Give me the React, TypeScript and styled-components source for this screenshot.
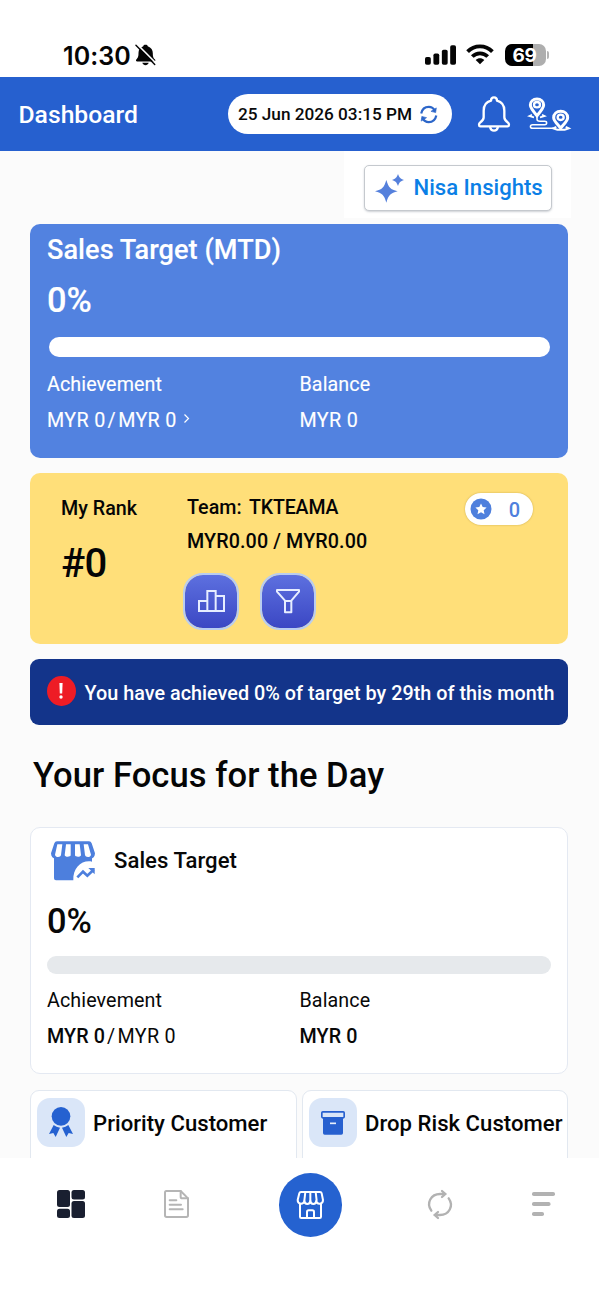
import React from 'react';
import styled, { createGlobalStyle } from 'styled-components';

const GlobalStyle = createGlobalStyle`
  * { box-sizing: border-box; }
  body { margin: 0; background: #fff; font-family: Roboto, sans-serif; color: #050505; }
  svg { display: block; flex: none; overflow: visible; }
`;

const Screen = styled.div`
  width: 599px;
  height: 1300px;
  overflow: hidden;
  display: flex;
  flex-direction: column;
  background: #fff;
`;

const Text = styled.span<{ $size: number; $lh?: number; $weight?: number; $ls?: number; $color?: string }>`
  display: block;
  white-space: nowrap;
  font-size: ${p => p.$size}px;
  line-height: ${p => p.$lh ?? 24}px;
  font-weight: ${p => p.$weight ?? 500};
  letter-spacing: ${p => p.$ls ?? 0}px;
  color: ${p => p.$color ?? 'inherit'};
`;

const StatusBar = styled.div`
  height: 77px;
  flex: none;
  display: flex;
  align-items: center;
  padding: 33px 50px 0 63px;
`;
const Clock = styled(Text)`
  font-family: Inter, sans-serif;
  padding-top: 1px;
`;
const MutedBell = styled.div`margin-left: 4.5px;`;
const StatusIcons = styled.div`
  margin: -1px 0 0 auto;
  display: flex;
  align-items: center;
`;
const Wifi = styled.div`margin: 0 11px 0 10px;`;
const Battery = styled.div`
  width: 41px;
  height: 22px;
  border-radius: 7px;
  background: linear-gradient(90deg, #000 69%, #aeaeae 69%);
  display: flex;
  align-items: center;
  justify-content: center;
  padding: 1px 1px 0 0;
  font: 700 19px/21px Inter, sans-serif;
  letter-spacing: -0.4px;
  color: #fff;
`;
const BatteryTip = styled.div`
  width: 2.5px;
  height: 8px;
  margin-left: 1px;
  border-radius: 0 3px 3px 0;
  background: #b4b4b4;
`;

const Header = styled.header`
  height: 74px;
  flex: none;
  display: flex;
  align-items: center;
  padding: 0 28.5px 0 18.5px;
  background: #2660cf;
  color: #fff;
`;
const PageTitle = styled(Text)`padding-top: 2px;`;
const DatePill = styled.div`
  width: 224px;
  height: 40px;
  margin-left: auto;
  padding: 0 14px 0 10.5px;
  border-radius: 20px;
  background: #fff;
  color: #0a0a0a;
  display: flex;
  align-items: center;
  justify-content: space-between;
`;
const HeaderIcons = styled.div`
  display: flex;
  align-items: center;
  gap: 17px;
  margin-left: 25px;
`;

const Content = styled.main`
  height: 1007px;
  flex: none;
  overflow: hidden;
  padding: 0 31px 0 30px;
  background: #fbfbfb;
`;
const InsightsArea = styled.div`
  width: 227px;
  height: 67px;
  margin: 0 -3px 5.5px auto;
  padding: 14px 19px 0 20px;
  background: #fff;
`;
const InsightsButton = styled.button`
  width: 188px;
  height: 46px;
  padding: 0 0 2px 10px;
  border: 1.5px solid #c5c9ce;
  border-radius: 5px;
  background: #fff;
  box-shadow: 0 1px 2px rgba(60, 70, 90, 0.25);
  display: flex;
  align-items: center;
  gap: 9.5px;
  font-family: inherit;
`;
const Spark = styled.div`padding-top: 2px;`;

const TargetCard = styled.section<{ $light?: boolean }>`
  height: ${p => (p.$light ? 247 : 234)}px;
  padding: ${p => (p.$light ? '13px 16px 0' : '10px 17px 0 17px')};
  border-radius: 10px;
  border: ${p => (p.$light ? '1px solid #e4e9f2' : 'none')};
  background: ${p => (p.$light ? '#fff' : '#5282e0')};
  color: ${p => (p.$light ? '#080808' : '#fff')};
  -webkit-text-stroke: ${p => (p.$light ? 0 : 0.15)}px;
`;
const CardTitle = styled.div`
  display: flex;
  align-items: center;
  gap: 19px;
  padding-left: 4px;
`;
const CardName = styled(Text)`padding-bottom: 2px;`;
const Percent = styled(Text)<{ $top: number }>`margin-top: ${p => p.$top}px;`;
const Track = styled.div<{ $light?: boolean }>`
  height: ${p => (p.$light ? 18 : 19.5)}px;
  margin: ${p => (p.$light ? '15px 0' : '17px 1px 16px 2px')};
  border-radius: 10px;
  background: ${p => (p.$light ? '#e6e9ec' : '#fff')};
`;
const Figures = styled.div`
  display: grid;
  grid-template-columns: 252.5px 1fr;
  row-gap: 12px;
`;
const Amount = styled.div`
  display: flex;
  align-items: center;
`;
const Slash = styled(Text)`margin: 0 2.5px 0 2px;`;
const Chevron = styled.div`margin: -4px 0 0 7.5px;`;

const RankCard = styled.section`
  height: 171px;
  margin-top: 15px;
  padding: 20px 35px 0 31px;
  border-radius: 10px;
  background: #ffdf79;
  display: flex;
  align-items: flex-start;
`;
const RankColumn = styled.div`
  width: 126px;
  padding-top: 4px;
  display: flex;
  flex-direction: column;
  gap: 23px;
`;
const TeamColumn = styled.div`
  padding-top: 3.5px;
  display: flex;
  flex-direction: column;
  gap: 9.5px;
`;
const TeamName = styled.div`
  display: flex;
  gap: 7.5px;
`;
const RankActions = styled.div`
  display: flex;
  gap: 21px;
  margin: 9.5px 0 0 -4px;
`;
const RankButton = styled.button`
  width: 56px;
  height: 57px;
  padding: 0;
  border: 2.5px solid #b9cdf0;
  border-radius: 20px;
  background: linear-gradient(#5d70df, #3b47c4);
  background-clip: padding-box;
  display: flex;
  align-items: center;
  justify-content: center;
`;
const Points = styled.div`
  width: 68px;
  height: 32px;
  margin-left: auto;
  padding: 0 13px 0 5px;
  border-radius: 16px;
  background: #fff;
  box-shadow: 0 0 2px rgba(120, 90, 0, 0.4);
  display: flex;
  align-items: center;
  justify-content: space-between;
`;
const PointsValue = styled(Text)`padding-top: 2px;`;

const Notice = styled.section`
  height: 66px;
  margin-top: 15.5px;
  padding: 0 0 0 17px;
  border-radius: 9px;
  background: #13348a;
  color: #fff;
  display: flex;
  align-items: center;
  gap: 9px;
`;
const Alert = styled.div`
  width: 28.5px;
  height: 30px;
  margin-top: -2px;
  border-radius: 50%;
  background: #ee1c25;
  display: flex;
  align-items: center;
  justify-content: center;
`;
const NoticeText = styled(Text)`padding-top: 3px;`;
const Heading = styled(Text)`margin: 29.5px 0 32.5px 3px;`;

const Shortcuts = styled.div`
  display: grid;
  grid-template-columns: 267px 266px;
  gap: 5px;
  margin-top: 16px;
`;
const Shortcut = styled.div`
  height: 110px;
  padding: 7px 0 0 6px;
  border: 1px solid #e2e8f0;
  border-radius: 9px;
  background: #fff;
  display: flex;
  align-items: flex-start;
  gap: 8px;
`;
const Tile = styled.div`
  width: 48px;
  height: 49px;
  flex: none;
  border-radius: 13px;
  background: #dae6f8;
  display: flex;
  align-items: center;
  justify-content: center;
`;
const TileGlyph = styled.div`margin-top: -2px;`;
const ShortcutLabel = styled(Text)`margin-top: 13px;`;

const TabBar = styled.nav`
  height: 142px;
  flex: none;
  display: flex;
  align-items: flex-start;
  padding: 15px 0 0 57px;
  background: #fff;
`;
const Tab = styled.div<{ $gap?: number }>`
  height: 62px;
  display: flex;
  align-items: center;
  margin-left: ${p => p.$gap ?? 0}px;
`;
const StoreTab = styled(Tab)`
  width: 63px;
  height: 63.5px;
  border-radius: 50%;
  background: #2562d0;
  justify-content: center;
`;

const MutedBellIcon = () => (
  <svg width="21" height="22" viewBox="0 0 66 69">
    <path d="M33 2c5 0 7 2 7 5 11 4 16 12 16 22 0 12 2 15 7 20 2 3 1 6-3 6H7c-4 0-5-3-3-6 5-6 7-9 7-21C11 18 16 11 26 7c0-3 2-5 7-5z" fill="#050505" />
    <path d="M23 59h20c-1 5-6 8-10 8s-9-3-10-8z" fill="#050505" />
    <path d="M7 1l57 57" stroke="#fff" strokeWidth="5" />
    <path d="M3 4l59 60" stroke="#050505" strokeWidth="4.500" strokeLinecap="round" />
  </svg>
);
const SignalIcon = () => (
  <svg width="31" height="20" viewBox="0 0 32 20" fill="#050505">
    <rect x="0" y="12" width="6" height="8" rx="1.8" />
    <rect x="8.7" y="8.5" width="6" height="11.5" rx="1.8" />
    <rect x="17.4" y="4.5" width="6" height="15.5" rx="1.8" />
    <rect x="26" y="0" width="6" height="20" rx="1.8" />
  </svg>
);
const WifiIcon = () => (
  <svg width="28" height="21" viewBox="0 0 28 21" fill="none" stroke="#050505" strokeWidth="3.8">
    <path d="M1.6 7.6C8.4 .6 19.600 .6 26.400 7.600" />
    <path d="M6.300 12.500c4.300-4.300 11.100-4.300 15.400 0" />
    <path d="M14 20.300l-4.300-4.400c2.400-2.200 6.200-2.200 8.600 0z" fill="#050505" stroke="none" />
  </svg>
);
const SyncIcon = () => (
  <svg width="17.500" height="17" viewBox="0 0 54 54" fill="none" stroke="#2c66c9" strokeWidth="7">
    <path d="M3 24C6 10 16 3 27 3c9 0 16 5 20 13" />
    <path d="M51 6L49 21 34 17z" fill="#2c66c9" strokeWidth="2" />
    <path d="M51 30c-3 14-13 21-24 21-9 0-16-5-20-13" />
    <path d="M3 48L5 33l15 4z" fill="#2c66c9" strokeWidth="2" />
  </svg>
);
const BellIcon = () => (
  <svg width="34" height="38" viewBox="0 0 102 114" fill="none" stroke="#fff" strokeWidth="7" strokeLinejoin="round">
    <path d="M51 7c-6 0-9 4-9 10C27 21 20 32 20 47v20c0 9-5 12-11 16-4 3-4 11 1 11h82c5 0 5-8 1-11-6-4-11-7-11-16V47c0-15-7-26-22-30 0-6-3-10-9-10z" />
    <path d="M39 96c2 8 7 11 12 11s10-3 12-11" />
  </svg>
);
const RouteIcon = () => (
  <svg width="43" height="35" viewBox="0 0 129 105" fill="none" stroke="#fff">
    <path d="M27 6C15 6 7 14 7 24c0 9 8 18 20 32 12-14 20-23 20-32C47 14 39 6 27 6z" strokeWidth="9" />
    <ellipse cx="27" cy="23" rx="9" ry="8" strokeWidth="7" />
    <path d="M12 53L4 57l14 4M42 53l8 4-14 4" strokeWidth="5" />
    <path d="M98 43c-12 0-21 8-21 19 0 9 9 17 21 31 12-14 21-22 21-31 0-11-9-19-21-19z" strokeWidth="9" />
    <ellipse cx="98" cy="61" rx="9" ry="8" strokeWidth="7" />
    <path d="M85 90l-9 4 12 4h22l12-4-9-4" strokeWidth="6" />
    <path d="M27 59v8c0 5 4 6 9 6h14c8 0 8 10 0 10H14c-9 0-9 11 0 11h62" strokeWidth="4.500" />
  </svg>
);
const SparkIcon = () => (
  <svg width="29" height="29" viewBox="0 0 87 87" fill="#5580dc">
    <path d="M34 18c7 23 12 28 34 34-22 6-27 11-34 34-7-23-12-28-34-34 22-6 27-11 34-34z" />
    <path d="M69 0c4 11 7 14 18 18-11 4-14 7-18 18-4-11-7-14-18-18 11-4 14-7 18-18z" />
  </svg>
);
const ChevronIcon = () => (
  <svg width="5" height="9" viewBox="0 0 5 9" fill="none" stroke="#fff" strokeWidth="1.200">
    <path d="M.5 .5l4 4-4 4" />
  </svg>
);
const PodiumIcon = () => (
  <svg width="27" height="22" viewBox="0 0 81 66" fill="none" stroke="#e6edff" strokeWidth="6">
    <path d="M3 33h25v30H3zM28 3h25v60H28zM53 18h25v45H53z" />
  </svg>
);
const FunnelIcon = () => (
  <svg width="24" height="24" viewBox="0 0 72 72" fill="none" stroke="#e6edff" strokeWidth="6" strokeLinejoin="round">
    <path d="M3 3h66v5L46 35v35H27V35L3 8zM27 36h19" />
  </svg>
);
const StarIcon = () => (
  <svg width="22" height="22" viewBox="0 0 22 22">
    <circle cx="11" cy="11" r="10.500" fill="#4f80dd" />
    <path d="M11 5.500l1.700 3.600 3.900.5-2.900 2.700.8 3.900-3.500-1.900-3.500 1.900.8-3.900-2.900-2.700 3.900-.5z" fill="#fff" />
  </svg>
);
const ExclamationIcon = () => (
  <svg width="4" height="16" viewBox="0 0 4 16" fill="#fff">
    <path d="M.4 0h3.200L3.200 10.500H.8z" />
    <circle cx="2" cy="14" r="1.700" />
  </svg>
);
const ShopGrowthIcon = () => (
  <svg width="44" height="40" viewBox="0 0 132 120">
    <path d="M9 42h114v20c-30-6-58 18-56 56H15q-6 0-6-6z" fill="#4d7fdd" />
    <path d="M18 1h96q6 0 8 6l10 30c0 16-14 20-24 12-8 6-18 6-26 0-8 6-22 6-30 0-8 6-18 6-26 0C14 57 0 53 0 37L10 7q2-6 8-6z" fill="#4d7fdd" />
    <g fill="#fff">
      <path d="M19 10h15l-4 32c-1 8-17 8-18-1z" />
      <path d="M45 10h14v33c-1 6-18 6-18-1z" />
      <path d="M72 10h14l4 32c0 7-17 7-18 1z" />
      <path d="M98 10h13l9 31c-1 9-17 9-18 1z" />
    </g>
    <path d="M79 109l17-17 13 12 19-18" fill="none" stroke="#4d7fdd" strokeWidth="8" />
    <path d="M112 81h19v19z" fill="#4d7fdd" />
  </svg>
);
const AwardIcon = () => (
  <svg width="24" height="30" viewBox="0 0 72 90" fill="#2561d0">
    <circle cx="36" cy="28" r="28" />
    <path d="M14 54q8 6 19 8L20 90l-7-12-13 3zM58 54q-8 6-19 8l13 28 7-12 13 3z" />
  </svg>
);
const ArchiveIcon = () => (
  <svg width="24" height="24" viewBox="0 0 72 72">
    <path d="M6 20h60v46q0 5-5 5H11q-5 0-5-5z" fill="#2760cf" />
    <rect x="2.500" y="2.500" width="67" height="18" rx="3" fill="#dae6f8" stroke="#2760cf" strokeWidth="5" />
    <path d="M27 37h18" stroke="#e8f0fc" strokeWidth="5" />
  </svg>
);
const GridIcon = () => (
  <svg width="28" height="28" viewBox="0 0 28 28" fill="#191f30">
    <rect x="0" y="0" width="13" height="17" rx="2.500" />
    <rect x="14.500" y="0" width="13.500" height="9.500" rx="2.500" />
    <rect x="0" y="18.700" width="13" height="9.300" rx="2.500" />
    <rect x="14.500" y="11" width="13.500" height="17" rx="2.500" />
  </svg>
);
const DocumentIcon = () => (
  <svg width="25" height="28" viewBox="0 0 75 84" fill="none" stroke="#b5b5b5" strokeWidth="6" strokeLinejoin="round" strokeLinecap="round">
    <path d="M7 3h43l22 22v51q0 5-5 5H8q-5 0-5-5V8q0-5 4-5z" />
    <path d="M50 3v17q0 5 5 5h17M17 31h20M17 44h34M17 58h39" />
  </svg>
);
const StoreIcon = () => (
  <svg width="27" height="28" viewBox="0 0 81 84" fill="none" stroke="#fff" strokeWidth="6" strokeLinejoin="round">
    <path d="M12 3h57q4 0 5 4l4 20c0 14-19 15-20 2-1 13-17 13-18 0-1 13-17 13-18 0C21 42 2 41 2 27L7 7q1-4 5-4z" />
    <path d="M25 3l-3 26M40 3v26M56 3l3 26M9 38v39q0 4 4 4h55q4 0 4-4V38" />
    <path d="M30 81V63q0-5 5-5h11q5 0 5 5v18" />
  </svg>
);
const RefreshIcon = () => (
  <svg width="24" height="29" viewBox="0 0 72 87" fill="none" stroke="#b2b2b2" strokeWidth="7" strokeLinecap="round">
    <path d="M10 62C-6 40 8 11 38 12h12M62 25c16 22 2 51-28 50H22" />
    <path d="M42 3l10 9-10 9M30 66l-10 9 10 9" />
  </svg>
);
const MenuIcon = () => (
  <svg width="23" height="24" viewBox="0 0 23 24" fill="#b2b2b2">
    <rect width="23" height="4" rx="1.800" />
    <rect y="10" width="18.500" height="4" rx="1.800" />
    <rect y="20" width="12" height="4" rx="1.800" />
  </svg>
);

const TargetFigures = ({ light }: { light?: boolean }) => (
  <Figures>
    <Text $size={19.7} $weight={400} $ls={0.1}>Achievement</Text>
    <Text $size={19.7} $weight={400} $ls={0.1}>Balance</Text>
    <Amount>
      <Text $size={19.7} $weight={light ? 500 : 400} $ls={light ? 0.1 : 0.35}>MYR 0</Text>
      <Slash $size={19.7} $weight={400}>/</Slash>
      <Text $size={19.7} $weight={400} $ls={0.3}>MYR 0</Text>
      {!light && <Chevron><ChevronIcon /></Chevron>}
    </Amount>
    <Text $size={19.7} $weight={light ? 500 : 400} $ls={light ? 0.1 : 0.35}>MYR 0</Text>
  </Figures>
);

export default function App() {
  return (
    <Screen>
      <GlobalStyle />
      <StatusBar>
        <Clock $size={25} $weight={600} $ls={0.1}>10:30</Clock>
        <MutedBell><MutedBellIcon /></MutedBell>
        <StatusIcons>
          <SignalIcon />
          <Wifi><WifiIcon /></Wifi>
          <Battery>69</Battery>
          <BatteryTip />
        </StatusIcons>
      </StatusBar>

      <Header>
        <PageTitle $size={24.7}>Dashboard</PageTitle>
        <DatePill>
          <Text $size={17.2}>25 Jun 2026 03:15 PM</Text>
          <SyncIcon />
        </DatePill>
        <HeaderIcons>
          <BellIcon />
          <RouteIcon />
        </HeaderIcons>
      </Header>

      <Content>
        <InsightsArea>
          <InsightsButton>
            <Spark><SparkIcon /></Spark>
            <Text $size={22.1} $color="#0b7fe6">Nisa Insights</Text>
          </InsightsButton>
        </InsightsArea>

        <TargetCard>
          <Text $size={27.1} $lh={32} $ls={0.05}>Sales Target (MTD)</Text>
          <Percent $size={34.4} $lh={40} $top={14.5}>0%</Percent>
          <Track />
          <TargetFigures />
        </TargetCard>

        <RankCard>
          <RankColumn>
            <Text $size={19.7}>My Rank</Text>
            <Text $size={40} $lh={40} $ls={-0.5}>#0</Text>
          </RankColumn>
          <TeamColumn>
            <TeamName>
              <Text $size={19.7}>Team:</Text>
              <Text $size={19.5} $ls={-0.15}>TKTEAMA</Text>
            </TeamName>
            <Text $size={19.7} $ls={0.12}>MYR0.00 / MYR0.00</Text>
            <RankActions>
              <RankButton><PodiumIcon /></RankButton>
              <RankButton><FunnelIcon /></RankButton>
            </RankActions>
          </TeamColumn>
          <Points>
            <StarIcon />
            <PointsValue $size={20} $color="#4f80dd">0</PointsValue>
          </Points>
        </RankCard>

        <Notice>
          <Alert><ExclamationIcon /></Alert>
          <NoticeText $size={19.8} $ls={0.02}>You have achieved 0% of target by 29th of this month</NoticeText>
        </Notice>

        <Heading $size={34.6} $lh={40} $ls={0.05}>Your Focus for the Day</Heading>

        <TargetCard $light>
          <CardTitle>
            <ShopGrowthIcon />
            <CardName $size={22.1} $ls={0.05}>Sales Target</CardName>
          </CardTitle>
          <Percent $size={34.4} $lh={40} $top={19.5}>0%</Percent>
          <Track $light />
          <TargetFigures light />
        </TargetCard>

        <Shortcuts>
          <Shortcut>
            <Tile><TileGlyph><AwardIcon /></TileGlyph></Tile>
            <ShortcutLabel $size={22.1} $ls={0.03}>Priority Customer</ShortcutLabel>
          </Shortcut>
          <Shortcut>
            <Tile><ArchiveIcon /></Tile>
            <ShortcutLabel $size={22.1} $ls={0.03}>Drop Risk Customer</ShortcutLabel>
          </Shortcut>
        </Shortcuts>
      </Content>

      <TabBar>
        <Tab><GridIcon /></Tab>
        <Tab $gap={79}><DocumentIcon /></Tab>
        <StoreTab $gap={90}><StoreIcon /></StoreTab>
        <Tab $gap={86}><RefreshIcon /></Tab>
        <Tab $gap={80}><MenuIcon /></Tab>
      </TabBar>
    </Screen>
  );
}
